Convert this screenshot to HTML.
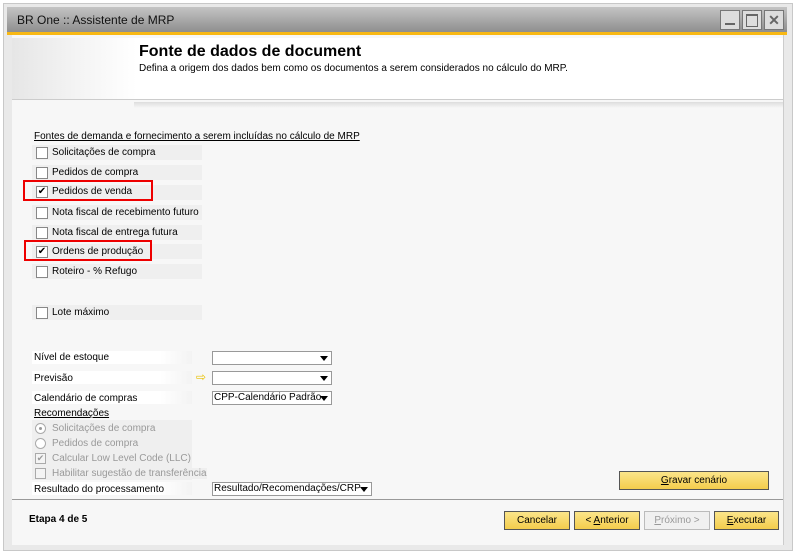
<!DOCTYPE html><html><head><style>
body{margin:0;width:796px;height:555px;background:#fff;font-family:"Liberation Sans",sans-serif;font-size:10px;color:#000;position:relative;overflow:hidden}
.a{position:absolute}
.row{position:absolute;left:32px;width:170px;height:15px;background:#efefef}
.cb{position:absolute;left:36px;width:10px;height:10px;border:1px solid #888;background:#fff}
.lb{position:absolute;left:52px}
.red{position:absolute;border:2px solid #e00;}
.dd{position:absolute;height:14px;border:1px solid #999;background:#fff;font-size:10px;line-height:12px;padding-left:1px;box-sizing:border-box;white-space:nowrap;overflow:hidden}
.dd:after{content:"";position:absolute;right:3px;top:4px;border-left:4px solid transparent;border-right:4px solid transparent;border-top:5px solid #000}
.btn{position:absolute;height:19px;border:1px solid #555;background:linear-gradient(#fbe58a,#f4cd4c);text-align:center;line-height:18px;box-sizing:border-box;font-size:10px}
.lr{position:absolute;left:32px;width:160px;height:13px;background:linear-gradient(90deg,#fff,#fff 80%,#f3f3f3)}
.g{color:#999}
</style></head><body>
<div class="a" style="left:3px;top:3px;width:788px;height:546px;border:1px solid #c8c8c8;background:#e9e9e9"></div>
<div class="a" style="left:7px;top:7px;width:780px;height:25px;background:linear-gradient(#c4c4c4,#8e8e8e)"></div>
<div class="a" style="left:17px;top:13px;font-size:12px;color:#111">BR One :: Assistente de MRP</div>
<div class="a" style="left:720px;top:10px;width:18px;height:18px;border:1px solid #777;background:#ddd"><div class="a" style="left:4px;top:12px;width:10px;height:2px;background:#666"></div></div>
<div class="a" style="left:742px;top:10px;width:18px;height:18px;border:1px solid #777;background:#ddd"><div class="a" style="left:3px;top:3px;width:10px;height:10px;border:1px solid #666;border-top-width:2px"></div></div>
<div class="a" style="left:764px;top:10px;width:18px;height:18px;border:1px solid #777;background:#ddd;color:#666;font-weight:bold;font-size:14px;text-align:center;line-height:18px">✕</div>
<div class="a" style="left:7px;top:32px;width:780px;height:3px;background:#f8b814"></div>
<div class="a" style="left:12px;top:35px;width:771px;height:510px;background:#f7f7f7;border-right:1px solid #ccc"></div>
<div class="a" style="left:12px;top:38px;width:771px;height:61px;background:#fff;border-bottom:1px solid #ccc"></div>
<div class="a" style="left:12px;top:38px;width:125px;height:61px;background:linear-gradient(90deg,#e6e6e6,#f6f6f6 60%,#fff)"></div>
<div class="a" style="left:134px;top:102px;width:649px;height:6px;background:linear-gradient(#ddd,#f7f7f7)"></div>
<div class="a" style="left:139px;top:43px;font-size:16px;font-weight:bold">Fonte de dados de document</div>
<div class="a" style="left:139px;top:63px;font-size:10px">Defina a origem dos dados bem como os documentos a serem considerados no cálculo do MRP.</div>
<div class="a" style="left:34px;top:131px;text-decoration:underline">Fontes de demanda e fornecimento a serem incluídas no cálculo de MRP</div>

<div class="row" style="top:145px"></div><div class="cb" style="top:147px"></div><div class="lb a" style="top:147px">Solicitações de compra</div>
<div class="row" style="top:165px"></div><div class="cb" style="top:167px"></div><div class="lb a" style="top:167px">Pedidos de compra</div>
<div class="row" style="top:185px"></div><div class="cb" style="top:186px;font-size:10px;line-height:10px;text-align:center">✔</div><div class="lb a" style="top:186px">Pedidos de venda</div>
<div class="red" style="left:23px;top:180px;width:126px;height:17px"></div>
<div class="row" style="top:205px"></div><div class="cb" style="top:207px"></div><div class="lb a" style="top:207px">Nota fiscal de recebimento futuro</div>
<div class="row" style="top:225px"></div><div class="cb" style="top:227px"></div><div class="lb a" style="top:227px">Nota fiscal de entrega futura</div>
<div class="row" style="top:244px"></div><div class="cb" style="top:246px;font-size:10px;line-height:10px;text-align:center">✔</div><div class="lb a" style="top:246px">Ordens de produção</div>
<div class="red" style="left:24px;top:240px;width:124px;height:17px"></div>
<div class="row" style="top:264px"></div><div class="cb" style="top:266px"></div><div class="lb a" style="top:266px">Roteiro - % Refugo</div>
<div class="row" style="top:305px"></div><div class="cb" style="top:307px"></div><div class="lb a" style="top:307px">Lote máximo</div>

<div class="lr" style="top:351px"></div><div class="a" style="left:34px;top:352px">Nível de estoque</div>
<div class="dd" style="left:212px;top:351px;width:120px"></div>
<div class="lr" style="top:371px"></div><div class="a" style="left:34px;top:373px">Previsão</div>
<div class="a" style="left:196px;top:370px;color:#e8c000;font-size:12px">⇨</div>
<div class="dd" style="left:212px;top:371px;width:120px"></div>
<div class="lr" style="top:391px"></div><div class="a" style="left:34px;top:393px">Calendário de compras</div>
<div class="dd" style="left:212px;top:391px;width:120px;padding-right:12px">CPP-Calendário Padrão</div>
<div class="a" style="left:34px;top:408px;text-decoration:underline">Recomendações</div>
<div class="a" style="left:32px;top:420px;width:160px;height:60px;background:#efefef"></div>
<div class="a g" style="left:35px;top:423px;width:9px;height:9px;border:1px solid #aaa;border-radius:50%;background:#fff"><div class="a" style="left:3px;top:3px;width:3px;height:3px;background:#999;border-radius:50%"></div></div><div class="a g" style="left:52px;top:423px">Solicitações de compra</div>
<div class="a" style="left:35px;top:438px;width:9px;height:9px;border:1px solid #aaa;border-radius:50%;background:#fff"></div><div class="a g" style="left:52px;top:438px">Pedidos de compra</div>
<div class="a g" style="left:35px;top:453px;width:9px;height:9px;border:1px solid #aaa;background:#f4f4f4;font-size:9px;line-height:9px;text-align:center">✔</div><div class="a g" style="left:52px;top:453px">Calcular Low Level Code (LLC)</div>
<div class="a" style="left:35px;top:468px;width:9px;height:9px;border:1px solid #aaa;background:#f4f4f4"></div><div class="a g" style="left:52px;top:468px;background:#efefef">Habilitar sugestão de transferência</div>
<div class="lr" style="top:482px"></div><div class="a" style="left:34px;top:484px">Resultado do processamento</div>
<div class="dd" style="left:212px;top:482px;width:160px;padding-right:12px">Resultado/Recomendações/CRP</div>
<div class="btn" style="left:619px;top:471px;width:150px"><u>G</u>ravar cenário</div>
<div class="a" style="left:12px;top:499px;width:771px;height:1px;background:#999"></div>
<div class="a" style="left:29px;top:514px;font-weight:bold">Etapa 4 de 5</div>
<div class="btn" style="left:504px;top:511px;width:66px">Cancelar</div>
<div class="btn" style="left:574px;top:511px;width:66px">&lt; <u>A</u>nterior</div>
<div class="btn" style="left:644px;top:511px;width:66px;background:#f0f0f0;border-color:#bbb;color:#999"><u>P</u>róximo &gt;</div>
<div class="btn" style="left:714px;top:511px;width:65px"><u>E</u>xecutar</div>
</body></html>
